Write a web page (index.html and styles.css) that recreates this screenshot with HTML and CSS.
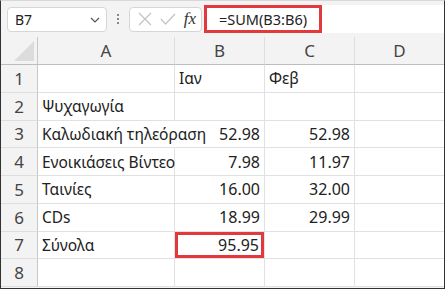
FILE: index.html
```html
<!DOCTYPE html>
<html lang="el">
<head>
    <meta charset="UTF-8">
    <title>Φύλλο</title>
    <link rel="stylesheet" href="styles.css">
</head>
<body>
    <div class="window">
        <div class="toolbar">
            <div class="namebox">
                <span>B7</span>
                <svg class="chevron" width="10" height="6" viewBox="0 0 10 6"><path d="M1 1 L5 5 L9 1" fill="none" stroke="#555" stroke-width="1.2"/></svg>
            </div>
            <div class="dots"><i></i><i></i><i></i></div>
            <div class="actions">
                <svg width="14" height="14" viewBox="0 0 14 14"><path d="M1 1 L13 13 M13 1 L1 13" stroke="#c4c4c4" stroke-width="1.3"/></svg>
                <svg width="16" height="12" viewBox="0 0 16 12"><path d="M1 6 L5.5 11 L15 1" fill="none" stroke="#c4c4c4" stroke-width="1.3"/></svg>
                <span class="fx">fx</span>
            </div>
            <div class="formula">
                <span class="formula-text">=SUM(B3:B6)</span>
            </div>
        </div>
        <div class="sheet">
            <div class="corner"><span class="tri"></span></div>
            <div class="colhead">A</div>
            <div class="colhead">B</div>
            <div class="colhead">C</div>
            <div class="colhead last">D</div>

            <div class="rowhead">1</div>
            <div class="cell"></div>
            <div class="cell">Ιαν</div>
            <div class="cell">Φεβ</div>
            <div class="cell last"></div>

            <div class="rowhead">2</div>
            <div class="cell">Ψυχαγωγία</div>
            <div class="cell"></div>
            <div class="cell"></div>
            <div class="cell last"></div>

            <div class="rowhead">3</div>
            <div class="cell spill">Καλωδιακή τηλεόραση</div>
            <div class="cell num">52.98</div>
            <div class="cell num">52.98</div>
            <div class="cell last"></div>

            <div class="rowhead">4</div>
            <div class="cell">Ενοικιάσεις Βίντεο</div>
            <div class="cell num">7.98</div>
            <div class="cell num">11.97</div>
            <div class="cell last"></div>

            <div class="rowhead">5</div>
            <div class="cell">Ταινίες</div>
            <div class="cell num">16.00</div>
            <div class="cell num">32.00</div>
            <div class="cell last"></div>

            <div class="rowhead">6</div>
            <div class="cell">CDs</div>
            <div class="cell num">18.99</div>
            <div class="cell num">29.99</div>
            <div class="cell last"></div>

            <div class="rowhead">7</div>
            <div class="cell">Σύνολα</div>
            <div class="cell num selected">95.95</div>
            <div class="cell"></div>
            <div class="cell last"></div>

            <div class="rowhead">8</div>
            <div class="cell"></div>
            <div class="cell"></div>
            <div class="cell"></div>
            <div class="cell last"></div>
        </div>
    </div>
</body>
</html>
```

FILE: styles.css
```css
body {
    margin: 0;
    padding: 0;
    font-family: "Noto Sans", "Open Sans", sans-serif;
    background-color: white;
}
.window {
    width: 445px;
    height: 289px;
    box-sizing: border-box;
    border: 1px solid #333;
    border-top-color: #d8d8d8;
    overflow: hidden;
    background-color: #f3f3f3;
}
.toolbar {
    height: 36px;
    display: flex;
    align-items: center;
    padding-left: 6px;
    box-sizing: border-box;
}
.namebox {
    width: 100px;
    height: 25px;
    box-sizing: border-box;
    background-color: white;
    border: 1px solid #d6d6d6;
    border-radius: 4px;
    display: flex;
    align-items: center;
    justify-content: space-between;
    padding: 0 6px 0 7px;
    font-size: 14px;
    color: #222;
}
.chevron {
    margin-top: 1px;
}
.dots {
    width: 22px;
    display: flex;
    flex-direction: column;
    align-items: center;
    gap: 2px;
}
.dots i {
    width: 2px;
    height: 2px;
    background-color: #888;
}
.actions {
    width: 73px;
    height: 25px;
    box-sizing: border-box;
    background-color: white;
    border: 1px solid #d6d6d6;
    border-radius: 4px;
    display: flex;
    align-items: center;
    justify-content: space-between;
    padding: 0 5px 0 8px;
}
.fx {
    font-family: "Liberation Serif", serif;
    font-style: italic;
    font-size: 17px;
    color: #333;
}
.formula {
    flex: 1;
    height: 28px;
    margin-left: 2px;
    background-color: white;
    display: flex;
    align-items: center;
}
.formula-text {
    height: 28px;
    box-sizing: border-box;
    border: 3px solid #e2393f;
    padding: 0 12px 0 12px;
    display: flex;
    align-items: center;
    font-size: 14.5px;
    color: #222;
}
.sheet {
    display: grid;
    grid-template-columns: 37px 137px 90px 90px 1fr;
    grid-template-rows: 28px repeat(8, 27.75px);
    background-color: white;
}
.corner {
    background-color: #f3f3f3;
    border-right: 1px solid #c8c8c8;
    border-bottom: 1px solid #bdbdbd;
    display: flex;
    align-items: flex-end;
    justify-content: flex-end;
    padding: 0 3px 3px 0;
}
.tri {
    width: 0;
    height: 0;
    border-left: 20px solid transparent;
    border-bottom: 20px solid #dcdcdc;
}
.colhead {
    background-color: #f3f3f3;
    border-right: 1px solid #dedede;
    border-bottom: 1px solid #bdbdbd;
    display: flex;
    align-items: center;
    justify-content: center;
    font-size: 17px;
    color: #444;
}
.colhead.last {
    border-right: none;
}
.rowhead {
    background-color: #f3f3f3;
    border-right: 1px solid #c8c8c8;
    border-bottom: 1px solid #dedede;
    display: flex;
    align-items: center;
    justify-content: center;
    font-size: 17px;
    color: #444;
}
.cell {
    border-right: 1px solid #e1e1e1;
    border-bottom: 1px solid #e1e1e1;
    display: flex;
    align-items: center;
    padding: 0 4px;
    font-size: 15.5px;
    color: #222;
    white-space: nowrap;
    min-width: 0;
}
.cell.last {
    border-right: none;
}
.spill {
    border-right-color: transparent;
}
.num {
    justify-content: flex-end;
    font-size: 16px;
}
.selected {
    box-shadow: inset 0 0 0 3px #e2393f;
    padding-right: 5px;
}
```
